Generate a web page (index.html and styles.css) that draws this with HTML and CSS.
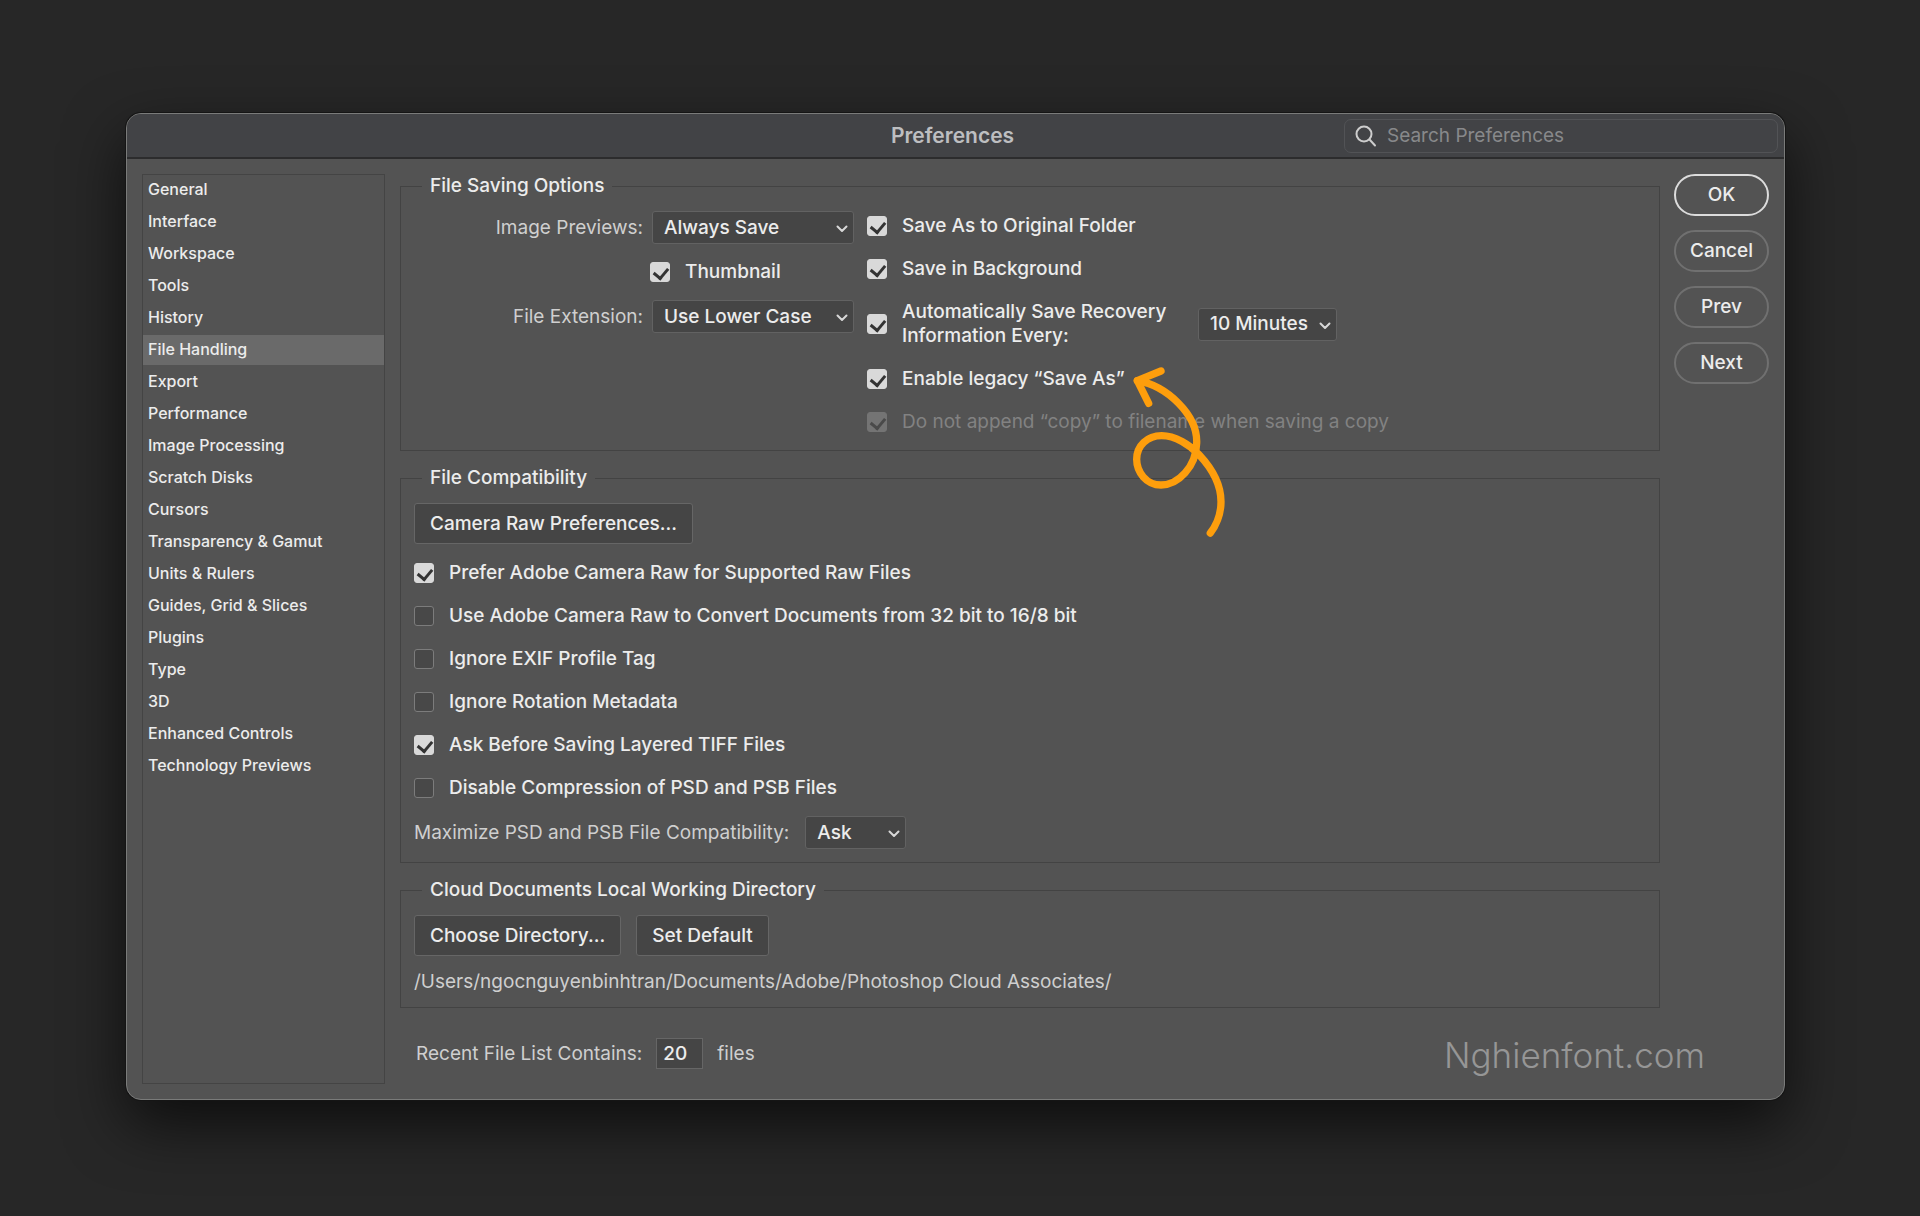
FILE: index.html
```
<!DOCTYPE html>
<html lang="en">
<head>
  <meta charset="utf-8">
  <title>Preferences</title>
  <meta name="viewport" content="width=device-width,initial-scale=1">
  <link rel="stylesheet" href="styles.css">
</head>
<body>
  <div class="window">
    <header class="titlebar">
      <h1 class="title">Preferences</h1>
      <label class="search">
        <svg class="search-icon" width="22" height="22" viewBox="0 0 22 22" fill="none" stroke="currentColor" stroke-width="2" stroke-linecap="round">
          <circle cx="9" cy="9" r="7.5"/>
          <path d="M14.5 14.5L20 20.5"/>
        </svg>
        <input type="text" placeholder="Search Preferences" aria-label="Search Preferences">
      </label>
    </header>

    <div class="content">
      <nav class="sidebar">
        <a href="#">General</a>
        <a href="#">Interface</a>
        <a href="#">Workspace</a>
        <a href="#">Tools</a>
        <a href="#">History</a>
        <a href="#" class="active">File Handling</a>
        <a href="#">Export</a>
        <a href="#">Performance</a>
        <a href="#">Image Processing</a>
        <a href="#">Scratch Disks</a>
        <a href="#">Cursors</a>
        <a href="#">Transparency &amp; Gamut</a>
        <a href="#">Units &amp; Rulers</a>
        <a href="#">Guides, Grid &amp; Slices</a>
        <a href="#">Plugins</a>
        <a href="#">Type</a>
        <a href="#">3D</a>
        <a href="#">Enhanced Controls</a>
        <a href="#">Technology Previews</a>
      </nav>

      <main class="panel">
        <fieldset class="saving">
          <legend>File Saving Options</legend>
          <div class="saving-left">
            <label class="muted" for="previews">Image Previews:</label>
            <span class="select">
              <select id="previews"><option>Always Save</option></select>
              <svg class="chevron" width="12" height="8" viewBox="0 0 12 8"><path d="M1.5 1.5L6 6L10.5 1.5"/></svg>
            </span>
            <label class="check thumbnail"><input type="checkbox" checked>Thumbnail</label>
            <label class="muted" for="extension">File Extension:</label>
            <span class="select">
              <select id="extension"><option>Use Lower Case</option></select>
              <svg class="chevron" width="12" height="8" viewBox="0 0 12 8"><path d="M1.5 1.5L6 6L10.5 1.5"/></svg>
            </span>
          </div>
          <div class="checks saving-right">
            <label class="check"><input type="checkbox" checked>Save As to Original Folder</label>
            <label class="check"><input type="checkbox" checked>Save in Background</label>
            <div class="row">
              <label class="check recovery"><input type="checkbox" checked>Automatically Save Recovery Information Every:</label>
              <span class="select select-minutes">
                <select aria-label="Recovery interval"><option>10 Minutes</option></select>
                <svg class="chevron" width="12" height="8" viewBox="0 0 12 8"><path d="M1.5 1.5L6 6L10.5 1.5"/></svg>
              </span>
            </div>
            <div class="row">
              <label class="check"><input type="checkbox" checked>Enable legacy “Save As”</label>
              <svg class="arrow" width="100" height="150" viewBox="0 0 300 450">
                <path d="M93 18L22 47L56 115"/>
                <path d="M22 47C110 62 204 150 200 235C198 305 145 360 93 360C48 360 20 320 20 283C20 242 52 212 95 212C135 212 180 240 208 270C250 315 273 365 273 410C273 450 256 485 241 504"/>
              </svg>
            </div>
            <label class="check disabled"><input type="checkbox" checked disabled>Do not append “copy” to filename when saving a copy</label>
          </div>
        </fieldset>

        <fieldset>
          <legend>File Compatibility</legend>
          <button class="button">Camera Raw Preferences...</button>
          <div class="checks compat">
            <label class="check"><input type="checkbox" checked>Prefer Adobe Camera Raw for Supported Raw Files</label>
            <label class="check"><input type="checkbox">Use Adobe Camera Raw to Convert Documents from 32 bit to 16/8 bit</label>
            <label class="check"><input type="checkbox">Ignore EXIF Profile Tag</label>
            <label class="check"><input type="checkbox">Ignore Rotation Metadata</label>
            <label class="check"><input type="checkbox" checked>Ask Before Saving Layered TIFF Files</label>
            <label class="check"><input type="checkbox">Disable Compression of PSD and PSB Files</label>
          </div>
          <div class="row maximize">
            <label class="muted" for="maximize">Maximize PSD and PSB File Compatibility:</label>
            <span class="select select-ask">
              <select id="maximize"><option>Ask</option></select>
              <svg class="chevron" width="12" height="8" viewBox="0 0 12 8"><path d="M1.5 1.5L6 6L10.5 1.5"/></svg>
            </span>
          </div>
        </fieldset>

        <fieldset>
          <legend>Cloud Documents Local Working Directory</legend>
          <div class="row buttons">
            <button class="button">Choose Directory...</button>
            <button class="button">Set Default</button>
          </div>
          <p class="path muted">/Users/ngocnguyenbinhtran/Documents/Adobe/Photoshop Cloud Associates/</p>
        </fieldset>

        <div class="row recent muted">
          <label for="recent">Recent File List Contains:</label>
          <input type="text" id="recent" value="20">
          <span>files</span>
        </div>
      </main>

      <div class="actions">
        <button class="pill primary">OK</button>
        <button class="pill">Cancel</button>
        <button class="pill">Prev</button>
        <button class="pill">Next</button>
      </div>
    </div>

    <div class="watermark">Nghienfont.com</div>
  </div>
</body>
</html>
```
FILE: styles.css
```
* {
  box-sizing: border-box;
}

body {
  margin: 0;
  min-height: 100vh;
  padding: 113px 135px 116px 126px;
  display: flex;
  background: #272727;
  color: #ececec;
  font: 500 19px/24px Inter, "Liberation Sans", sans-serif;
}

input, select, button {
  font: inherit;
  color: inherit;
}

.window {
  position: relative;
  flex: 1;
  display: flex;
  flex-direction: column;
  background: #535353;
  border: 1px solid #7a7b7a;
  border-radius: 15px;
  box-shadow: 0 0 0 1px #151515, 0 24px 60px rgba(0, 0, 0, 0.65);
}

/* title bar */
.titlebar {
  height: 45px;
  padding-right: 6px;
  display: grid;
  grid-template-columns: 1fr auto 1fr;
  align-items: center;
  background: #424346;
  border-bottom: 2px solid #2c2c2d;
  border-radius: 14px 14px 0 0;
}

.title {
  grid-column: 2;
  margin: 0;
  font-size: 21px;
  font-weight: 600;
  color: #bdbec0;
}

.search {
  justify-self: end;
  width: 434px;
  height: 34px;
  padding-left: 10px;
  display: flex;
  align-items: center;
  gap: 10px;
  border: 1px solid #525356;
  border-radius: 7px;
}

.search-icon {
  color: #cdcdcd;
}

.search input {
  flex: 1;
  min-width: 0;
  padding: 0;
  background: none;
  border: none;
  outline: none;
  font-weight: 400;
}

.search input::placeholder {
  color: #88898b;
}

/* layout */
.content {
  flex: 1;
  padding: 15px;
  display: flex;
}

.sidebar {
  width: 243px;
  margin-right: 15px;
  border: 1px solid #444;
  font-size: 16px;
}

.sidebar a {
  display: block;
  height: 30px;
  margin-bottom: 2px;
  padding: 0 5px;
  line-height: 28px;
  color: inherit;
  text-decoration: none;
}

.sidebar .active {
  background: #6a6a6a;
}

.panel {
  flex: 1;
}

.actions {
  width: 95px;
  margin-left: 14px;
  display: flex;
  flex-direction: column;
  gap: 14px;
}

.row {
  display: flex;
  align-items: center;
}

.muted {
  color: #cfcfcf;
  font-weight: 400;
}

fieldset {
  min-width: 0;
  margin: 0 0 15px;
  padding: 13px;
  border: 1px solid #434343;
}

legend {
  margin-left: 8px;
  padding: 0 8px;
}

/* controls */
.button {
  height: 41px;
  padding: 0 15px;
  background: #454545;
  border: 1px solid #666;
  border-radius: 3px;
}

.pill {
  height: 42px;
  padding: 0;
  background: none;
  border: 2px solid #707070;
  border-radius: 21px;
}

.primary {
  border-color: #dcdcdc;
}

.select {
  position: relative;
  display: block;
}

.select select {
  display: block;
  width: 100%;
  height: 33px;
  padding: 0 11px;
  appearance: none;
  background: #454545;
  border: 1px solid #626262;
  border-radius: 3px;
}

.chevron {
  position: absolute;
  right: 6px;
  top: 14px;
  pointer-events: none;
  fill: none;
  stroke: #d8d8d8;
  stroke-width: 2;
  stroke-linecap: round;
  stroke-linejoin: round;
}

.checks {
  display: flex;
  flex-direction: column;
  align-items: flex-start;
  gap: 19px;
}

.check {
  display: flex;
  align-items: center;
  gap: 15px;
}

.check input {
  appearance: none;
  flex: none;
  position: relative;
  width: 20px;
  height: 20px;
  margin: 0;
  background: #484848;
  border: 1px solid #7c7c7c;
  border-radius: 3px;
}

.check input:checked {
  background: #d9d9d9;
  border-color: #d9d9d9;
}

.check input:checked::after {
  content: "";
  position: absolute;
  left: 5px;
  top: 2px;
  width: 7px;
  height: 11px;
  border: solid #333;
  border-width: 0 3px 3px 0;
  transform: rotate(40deg);
}

.disabled {
  color: #828282;
  font-weight: 400;
}

.check input:disabled {
  background: #747474;
  border-color: #747474;
}

.check input:disabled::after {
  border-color: #4a4a4a;
}

/* file saving options */
.saving {
  display: flex;
  gap: 13px;
  padding: 13px 13px 16px 0;
}

.saving legend {
  margin-left: 21px;
}

.saving-left {
  display: grid;
  grid-template-columns: 242px 202px;
  align-content: start;
  align-items: center;
  gap: 16px 9px;
}

.saving-left > .muted {
  text-align: right;
}

.thumbnail {
  grid-column: 2;
  margin-left: -2px;
}

.saving-right {
  padding-top: 3px;
}

.recovery {
  width: 331px;
}

.select-minutes {
  width: 139px;
  margin: -9px 0;
}

.saving-right .row {
  position: relative;
}

/* hand-drawn pointer over the panel */
.arrow {
  position: absolute;
  left: 100%;
  top: -2px;
  margin-left: 5px;
  overflow: visible;
  fill: none;
  stroke: #fe9e0c;
  stroke-width: 22px;
  stroke-linecap: round;
  stroke-linejoin: round;
}

/* file compatibility */
.compat {
  margin-top: 17px;
}

.maximize {
  margin-top: 16px;
  gap: 16px;
}

.select-ask {
  width: 101px;
}

.buttons {
  gap: 15px;
}

.path {
  margin: 14px 0 0;
}

.recent {
  margin-top: 30px;
  padding-left: 16px;
  gap: 14px;
}

.recent input {
  width: 47px;
  height: 31px;
  padding: 0 6px;
  background: #454545;
  border: 1px solid #666;
  color: #ececec;
  font-weight: 500;
}

.watermark {
  position: absolute;
  right: 79px;
  bottom: 24px;
  color: #969696;
  font-size: 35px;
  font-weight: 300;
  line-height: 40px;
}
```
